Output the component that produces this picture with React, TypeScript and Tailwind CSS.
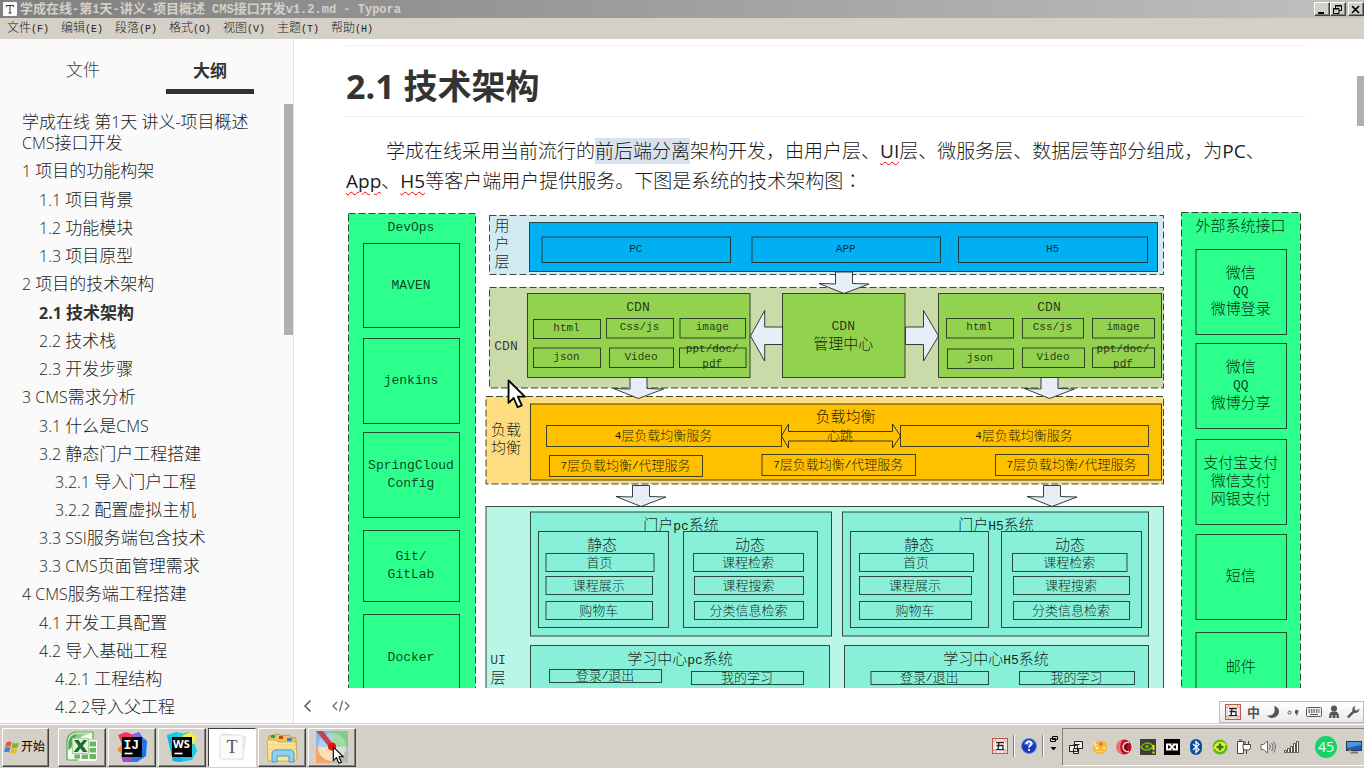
import React from 'react';

/* ---------- text helpers ---------- */

const splitRuns = (s: string) => s.match(/[\x20-\x7e]+|[^\x20-\x7e]+/g) ?? [];
const isLatin = (s: string) => /^[\x20-\x7e]/.test(s);

function Mixed({ text, latin }: { text: string; latin: string }) {
  return (
    <>
      {splitRuns(text).map((r, i) =>
        isLatin(r) ? (
          <span key={i} className={latin}>
            {r}
          </span>
        ) : (
          <React.Fragment key={i}>{r}</React.Fragment>
        ),
      )}
    </>
  );
}

/* ---------- outline ---------- */

type Item = { level: 1 | 2 | 3; text: string; active?: boolean };

const outline: Item[] = [
  { level: 1, text: '1 项目的功能构架' },
  { level: 2, text: '1.1 项目背景' },
  { level: 2, text: '1.2 功能模块' },
  { level: 2, text: '1.3 项目原型' },
  { level: 1, text: '2 项目的技术架构' },
  { level: 2, text: '2.1 技术架构', active: true },
  { level: 2, text: '2.2 技术栈' },
  { level: 2, text: '2.3 开发步骤' },
  { level: 1, text: '3 CMS需求分析' },
  { level: 2, text: '3.1 什么是CMS' },
  { level: 2, text: '3.2 静态门户工程搭建' },
  { level: 3, text: '3.2.1 导入门户工程' },
  { level: 3, text: '3.2.2 配置虚拟主机' },
  { level: 2, text: '3.3 SSI服务端包含技术' },
  { level: 2, text: '3.3 CMS页面管理需求' },
  { level: 1, text: '4 CMS服务端工程搭建' },
  { level: 2, text: '4.1 开发工具配置' },
  { level: 2, text: '4.2 导入基础工程' },
  { level: 3, text: '4.2.1 工程结构' },
  { level: 3, text: '4.2.2导入父工程' },
];

const levelClass = {
  1: 'pl-[22px] pt-1 pb-1',
  2: 'pl-[39px] pt-1 pb-[3px]',
  3: 'pl-[55px] pt-1 pb-[3px]',
};

function Sidebar() {
  return (
    <aside className="relative flex w-[294px] shrink-0 flex-col overflow-hidden border-r border-[#e5e5e5] bg-[#fafafa] text-[17px] text-[#1a1a1a]">
      <div className="flex justify-evenly pt-[13px]">
        <button className="w-[88px] pt-2 pb-[14px] leading-[20px] font-light text-[#444]">文件</button>
        <button className="w-[88px] border-b-[5px] border-[#333] pt-[9px] pb-[8px] leading-[20px] font-bold text-[#333]">
          大纲
        </button>
      </div>
      <nav className="flex flex-col pt-[17px] leading-[21px] font-light">
        <a href="#top" className="pr-8 pb-[3px] pl-[22px]">
          <Mixed text="学成在线 第1天 讲义-项目概述" latin="text-[16px] leading-none" />
          <br />
          <Mixed text="CMS接口开发" latin="text-[16px] leading-none" />
        </a>
        {outline.map((it) => (
          <a
            key={it.text}
            href="#section"
            className={`whitespace-nowrap ${levelClass[it.level]} ${it.active ? 'font-bold text-[#333]' : ''}`}
          >
            <Mixed text={it.text} latin="text-[16px] leading-none" />
          </a>
        ))}
      </nav>
      <div className="absolute top-[65px] right-0 h-[231px] w-[9px] bg-[#b0b0b0]" />
    </aside>
  );
}

/* ---------- architecture diagram ---------- */

const INK = '#1c2b22';

function Label({ x, y, t, small }: { x: number; y: number; t: string; small?: boolean }) {
  const hasHan = splitRuns(t).some((r) => !isLatin(r));
  return (
    <text
      x={x}
      y={hasHan ? y + 1 : y}
      textAnchor="middle"
      dominantBaseline="central"
      fill="#000"
      fillOpacity={hasHan ? 0.88 : 0.75}
      className={small ? 'text-[13px]' : 'text-[15px]'}
    >
      {splitRuns(t).map((r, i) => (
        <tspan key={i} className={isLatin(r) ? (small ? 'text-[11px]' : 'text-[13px]') : ''}>
          {r}
        </tspan>
      ))}
    </text>
  );
}

function Box({
  b,
  fill = 'none',
  dash,
  t,
  small,
}: {
  b: [number, number, number, number];
  fill?: string;
  dash?: boolean;
  t?: string[];
  small?: boolean;
}) {
  const [x1, y1, x2, y2] = b;
  const lines = t ?? [];
  const step = small ? 15 : 18;
  return (
    <g>
      <rect
        x={x1}
        y={y1}
        width={x2 - x1}
        height={y2 - y1}
        fill={fill}
        stroke={INK}
        strokeOpacity={0.85}
        strokeDasharray={dash ? '7 3' : undefined}
      />
      {lines.map((l, i) => (
        <Label
          key={i}
          x={(x1 + x2) / 2 - 0.5}
          y={(y1 + y2) / 2 - 1 + (i - (lines.length - 1) / 2) * step}
          t={l}
          small={small}
        />
      ))}
    </g>
  );
}

function DownArrow({ x, y, h }: { x: number; y: number; h: number }) {
  const n = y + h - 10;
  return (
    <polygon
      points={`${x - 8.5},${y} ${x + 8.5},${y} ${x + 8.5},${n} ${x + 25},${n + 0.5} ${x},${y + h} ${x - 25},${n} ${x - 8.5},${n + 0.5}`}
      fill="#e8eef8"
      stroke={INK}
      strokeWidth={0.9}
    />
  );
}

function Diagram() {
  const G = '#2cff8b';
  const C = '#92d24f';
  const T = '#88f0d8';
  return (
    <svg
      viewBox="346 210 960 478"
      className="block w-full font-['Liberation_Mono','Noto_Sans_CJK_SC',monospace] font-light"
      role="img"
      aria-label="技术架构图"
    >
      <Box b={[348.5, 213.5, 475.5, 740.5]} fill={G} dash />
      <Label x={411} y={227} t="DevOps" />
      <Box b={[363.5, 243.5, 459.5, 327.5]} t={['MAVEN']} />
      <Box b={[363.5, 338.5, 459.5, 423.5]} t={['jenkins']} />
      <Box b={[363.5, 432.5, 459.5, 517.5]} t={['SpringCloud', 'Config']} />
      <Box b={[363.5, 530.5, 459.5, 601.5]} t={['Git/', 'GitLab']} />
      <Box b={[363.5, 614.5, 459.5, 700.5]} t={['Docker']} />

      <Box b={[489.5, 215.5, 1163.5, 274.5]} fill="#d2ebf2" dash />
      <Label x={502} y={226} t="用" />
      <Label x={502} y={244} t="户" />
      <Label x={502} y={262} t="层" />
      <Box b={[529.5, 222.5, 1157.5, 271.5]} fill="#00b0f3" />
      <Box b={[542, 237, 730.5, 262.5]} t={['PC']} small />
      <Box b={[752, 237, 940.5, 262.5]} t={['APP']} small />
      <Box b={[958.5, 237, 1147.5, 262.5]} t={['H5']} small />

      <Box b={[489.5, 287.5, 1163.5, 388]} fill="#cadba9" dash />
      <Label x={506} y={346} t="CDN" />
      <Box b={[527.5, 293.5, 750, 377.5]} fill={C} />
      <Box b={[782.5, 293.5, 905, 377.5]} fill={C} t={['CDN', '管理中心']} />
      <Box b={[938.5, 293.5, 1161.5, 377.5]} fill={C} />
      <Label x={638} y={307} t="CDN" />
      <Label x={1049} y={307} t="CDN" />
      <Box b={[533.5, 319.5, 600.5, 338.5]} t={['html']} small />
      <Box b={[606.5, 318.5, 673.5, 338]} t={['Css/js']} small />
      <Box b={[680, 318.5, 745.5, 338]} t={['image']} small />
      <Box b={[533.5, 348, 600.5, 367.5]} t={['json']} small />
      <Box b={[609.5, 348, 673.5, 367.5]} t={['Video']} small />
      <Box b={[679.5, 348, 746, 367.5]} t={['ppt/doc/', 'pdf']} small />
      <Box b={[946.5, 318.5, 1013.5, 338]} t={['html']} small />
      <Box b={[1022.5, 318.5, 1083.5, 338]} t={['Css/js']} small />
      <Box b={[1092.5, 318.5, 1154.5, 338]} t={['image']} small />
      <Box b={[947.5, 349, 1013.5, 368.5]} t={['json']} small />
      <Box b={[1022.5, 348, 1084.5, 367.5]} t={['Video']} small />
      <Box b={[1092.5, 348, 1154.5, 367.5]} t={['ppt/doc/', 'pdf']} small />

      <polygon
        points="750.5,336 764.7,310.5 764.7,327 782.5,327 782.5,344.5 764.7,344.5 764.7,361"
        fill="#e8eef8"
        stroke={INK}
        strokeWidth={0.9}
      />
      <polygon
        points="938.5,336 923.5,310.5 923.5,327 905.5,327 905.5,344.5 923.5,344.5 923.5,361"
        fill="#e8eef8"
        stroke={INK}
        strokeWidth={0.9}
      />
      <DownArrow x={844} y={272} h={21.5} />

      <Box b={[486, 396.5, 1163.5, 484]} fill="#fedd80" dash />
      <Label x={506} y={430} t="负载" />
      <Label x={506} y={448} t="均衡" />
      <Box b={[530.5, 404, 1161.5, 480]} fill="#ffc000" />
      <Label x={845.5} y={417} t="负载均衡" />
      <Box b={[546.5, 425.5, 781.5, 446.5]} t={['4层负载均衡服务']} small />
      <Box b={[900.5, 425.5, 1148.5, 446.5]} t={['4层负载均衡服务']} small />
      <polygon
        points="781.5,436 788.5,424 788.5,431.5 892.5,431.5 892.5,424 900.5,436 892.5,448 892.5,441 788.5,441 788.5,448"
        fill="none"
        stroke={INK}
        strokeWidth={0.9}
      />
      <Label x={840} y={435} t="心跳" small />
      <Box b={[549.5, 455.5, 702.5, 476.5]} t={['7层负载均衡/代理服务']} small />
      <Box b={[762, 454.5, 915.5, 475.5]} t={['7层负载均衡/代理服务']} small />
      <Box b={[995.5, 454.5, 1148.5, 475.5]} t={['7层负载均衡/代理服务']} small />
      <DownArrow x={638.5} y={377.5} h={21} />
      <DownArrow x={1049.5} y={377.5} h={21} />

      <Box b={[486, 506.5, 1163.5, 740.5]} fill="#baf6e6" />
      <DownArrow x={641} y={485.5} h={21} />
      <DownArrow x={1052} y={485.5} h={21} />
      <Label x={498} y={660} t="UI" />
      <Label x={498} y={678} t="层" />
      <Box b={[530.5, 512, 831.5, 636]} fill={T} />
      <Box b={[842.5, 512, 1148.5, 636]} fill={T} />
      <Label x={681} y={525} t="门户pc系统" />
      <Label x={996} y={525} t="门户H5系统" />
      <Box b={[538.5, 531.5, 668.5, 627.5]} />
      <Box b={[683.5, 531.5, 817.5, 627.5]} />
      <Box b={[850.5, 531.5, 988.5, 627.5]} />
      <Box b={[1001.5, 531.5, 1141.5, 627.5]} />
      <Label x={602} y={544.5} t="静态" />
      <Label x={750} y={544.5} t="动态" />
      <Label x={919} y={544.5} t="静态" />
      <Label x={1070} y={544.5} t="动态" />
      <Box b={[546, 553.5, 654, 571.5]} t={['首页']} small />
      <Box b={[546, 576.5, 652.5, 594.5]} t={['课程展示']} small />
      <Box b={[546, 601.5, 652.5, 619.5]} t={['购物车']} small />
      <Box b={[693.5, 553.5, 803.5, 571.5]} t={['课程检索']} small />
      <Box b={[694.5, 576.5, 803.5, 594.5]} t={['课程搜索']} small />
      <Box b={[694.5, 601.5, 803.5, 619.5]} t={['分类信息检索']} small />
      <Box b={[859.5, 553.5, 973.5, 571.5]} t={['首页']} small />
      <Box b={[859.5, 576.5, 971.5, 594.5]} t={['课程展示']} small />
      <Box b={[859.5, 601.5, 971.5, 619.5]} t={['购物车']} small />
      <Box b={[1012.5, 553.5, 1127, 571.5]} t={['课程检索']} small />
      <Box b={[1013.5, 576.5, 1129.5, 594.5]} t={['课程搜索']} small />
      <Box b={[1013.5, 601.5, 1129.5, 619.5]} t={['分类信息检索']} small />
      <Box b={[530.5, 645.5, 829.5, 740.5]} fill={T} />
      <Box b={[844.5, 645.5, 1148.5, 740.5]} fill={T} />
      <Label x={680} y={658.5} t="学习中心pc系统" />
      <Label x={996} y={658.5} t="学习中心H5系统" />
      <Box b={[549.5, 669.5, 661.5, 682.5]} t={['登录/退出']} small />
      <Box b={[691.5, 671.5, 803.5, 684.5]} t={['我的学习']} small />
      <Box b={[871, 671.5, 988.5, 684.5]} t={['登录/退出']} small />
      <Box b={[1019.5, 671.5, 1134.5, 684.5]} t={['我的学习']} small />

      <Box b={[1181.5, 212.5, 1300.5, 740.5]} fill={G} dash />
      <Label x={1240.5} y={226} t="外部系统接口" />
      <Box b={[1196, 249.5, 1286.5, 334.5]} t={['微信', 'QQ', '微博登录']} />
      <Box b={[1196, 343.5, 1286.5, 428.5]} t={['微信', 'QQ', '微博分享']} />
      <Box b={[1196, 439.5, 1286.5, 524.5]} t={['支付宝支付', '微信支付', '网银支付']} />
      <Box b={[1196, 534.5, 1286.5, 619.5]} t={['短信']} />
      <Box b={[1196, 632.5, 1286.5, 703.5]} t={['邮件']} />
    </svg>
  );
}

/* ---------- editor ---------- */

function Editor() {
  const typo = 'underline decoration-[#f00000] decoration-wavy decoration-1 underline-offset-[3px]';
  return (
    <main className="relative flex min-w-0 flex-1 flex-col bg-white">
      <div className="min-h-0 flex-1 overflow-hidden pt-[6px] pr-[58px] pl-[52px]">
        <hr className="border-[#eee]" />
        <h1 className="border-b border-[#eee] pt-[19px] pb-[9px] text-[34px] leading-[42px] font-bold text-[#333]">
          2.1 技术架构
        </h1>
        <p className="mt-[19px] pb-[14px] text-[19px] leading-[30px] font-light whitespace-nowrap text-[#1a1a1a]">
          <span className="pl-10">学成在线采用当前流行的</span>
          <span className="bg-[#d9e2ec]">前后端分离</span>架构开发，由用户层、
          <span className={`font-normal ${typo}`}>UI</span>
          层、微服务层、数据层等部分组成，为<span className="font-normal">PC</span>、
          <br />
          <span className={`font-normal ${typo}`}>App</span>、<span className={`font-normal ${typo}`}>H5</span>
          等客户端用户提供服务。下图是系统的技术架构图
          <span className="font-['Noto_Sans_CJK_JP',sans-serif] leading-none" lang="ja">
            ：
          </span>
        </p>
        <Diagram />
      </div>
      <div className="flex h-[35px] shrink-0 items-center gap-[18px] bg-white pl-2">
        <button aria-label="折叠侧栏">
          <svg width="12" height="14" viewBox="0 0 12 14" fill="none" stroke="#555" strokeWidth="1.5">
            <path d="M8.5 1.5 3 7l5.500 5.500" />
          </svg>
        </button>
        <button aria-label="源代码模式">
          <svg width="18" height="14" viewBox="0 0 18 14" fill="none" stroke="#666" strokeWidth="1.200">
            <path d="M5 3 1 7l4 4M13 3l4 4-4 4M10.500 1.500l-3 11" />
          </svg>
        </button>
      </div>
      <div className="absolute top-[37px] right-0 h-[50px] w-[7px] bg-[#b0b0b0]" />
      <Cursor className="absolute top-[340px] left-[213px] h-[31px] w-[20px]" />
      <ImeBar />
    </main>
  );
}

function Cursor({ className }: { className: string }) {
  return (
    <svg viewBox="0 0 14 22" className={className}>
      <path
        d="M1 1v16l3.700-3.500L7.400 20l3-1.200-2.800-6.300h5z"
        fill="#fff"
        stroke="#000"
        strokeWidth="1.300"
        strokeLinejoin="round"
      />
    </svg>
  );
}

/* ---------- IME bar ---------- */

function Wubi() {
  return (
    <svg width="16" height="16" viewBox="0 0 16 16">
      <rect x="0.5" y="0.5" width="15" height="15" fill="#f8dcd8" stroke="#c0584c" />
      <path d="M1 3.500h14M1 12.500h14M3.500 1v14M12.500 1v14" stroke="#dd9a92" />
      <rect x="3" y="3" width="10" height="10" fill="#fff" />
      <path d="M4 4.500h8M4.500 7.500h6.500v4M7 4.500l-1 7M3.500 11.700h9" fill="none" stroke="#222" strokeWidth="1.300" />
    </svg>
  );
}

function ImeBar() {
  return (
    <div className="absolute right-0 bottom-0 flex h-[22px] w-[145px] items-center gap-[6px] border border-[#bbb] bg-linear-to-b from-white to-[#e9e9e9] pl-[5px] text-[#555]">
      <Wubi />
      <button className="text-[13px] leading-[16px] font-bold">中</button>
      <svg width="14" height="14" viewBox="0 0 14 14">
        <path d="M8 1c5 1 6.500 6 3.500 9.500S3 13.500 1 10.500c3.500.5 7-1 7.500-4C8.800 4.500 8.700 2.500 8 1z" fill="#555" />
      </svg>
      <svg width="14" height="14" viewBox="0 0 14 14">
        <circle cx="3.500" cy="7.500" r="1.500" fill="none" stroke="#555" />
        <path d="M9 6.500a1.700 1.700 0 1 1 3 1.200c-.2 1.500-1 2.600-2.300 3.100.5-.8.8-1.400.7-2.100A1.600 1.600 0 0 1 9 6.500z" fill="#555" />
      </svg>
      <svg width="16" height="12" viewBox="0 0 16 12">
        <rect x="0.500" y="1.500" width="15" height="9" rx="1" fill="#f4f4f4" stroke="#555" />
        <path d="M2.500 4h11M2.500 6h11" stroke="#555" strokeDasharray="1.500 1" strokeWidth="1.300" />
        <path d="M4 8.500h8" stroke="#555" />
      </svg>
      <svg width="12" height="14" viewBox="0 0 12 14" fill="#555">
        <circle cx="6" cy="3.500" r="3" />
        <path d="M1 13c0-4 1-6 3-6.500h4c2 .5 3 2.500 3 6.500H8.500v-3h-1V13h-3v-3h-1v3z" />
      </svg>
      <svg width="14" height="14" viewBox="0 0 14 14">
        <path
          d="M9.500 1a3.800 3.800 0 0 0-3 5L1 11.500 2.700 13.300 8.300 7.800a3.800 3.800 0 0 0 5-4.300L11 5.500 9 5l-.5-2z"
          fill="#555"
        />
      </svg>
    </div>
  );
}

/* ---------- window chrome ---------- */

const raised =
  'border border-t-white border-l-white border-r-[#404040] border-b-[#404040] bg-[#d4d0c8] shadow-[inset_-1px_-1px_0_#808080]';

function TitleBar() {
  return (
    <header className="flex h-[18px] shrink-0 items-center bg-linear-to-r from-[#808080] to-[#c0c0c0] pl-[3px]">
      <svg width="14" height="14" viewBox="0 0 14 14">
        <rect width="14" height="14" rx="1" fill="#fafafa" />
        <path d="M3.500 5V3.500h7V5M7 3.500v7.500M5.500 11h3" fill="none" stroke="#333" />
      </svg>
      <span className="ml-[3px] text-[13px] leading-[18px] font-bold whitespace-pre text-[#d4d0c8]">
        <Mixed
          text="学成在线-第1天-讲义-项目概述 CMS接口开发v1.2.md - Typora"
          latin="font-['Liberation_Mono',monospace] text-[12px]"
        />
      </span>
      <span className="flex-1" />
      <button aria-label="最小化" className={`h-[14px] w-[16px] ${raised}`}>
        <svg width="13" height="11" viewBox="0 0 13 11">
          <path d="M3 9h6" stroke="#000" strokeWidth="2" />
        </svg>
      </button>
      <button aria-label="还原" className={`h-[14px] w-[16px] ${raised}`}>
        <svg width="13" height="11" viewBox="0 0 13 11" fill="none" stroke="#000">
          <path d="M4.500 4V1.500h6v5H8M4 2h7M2.500 4.500H8v5H2.500zM2 5h6" />
        </svg>
      </button>
      <button aria-label="关闭" className={`ml-[2px] h-[14px] w-[16px] ${raised}`}>
        <svg width="13" height="11" viewBox="0 0 13 11">
          <path d="M3 2l7 7M10 2l-7 7" stroke="#000" strokeWidth="1.700" />
        </svg>
      </button>
    </header>
  );
}

const menus = ['文件(F)', '编辑(E)', '段落(P)', '格式(O)', '视图(V)', '主题(T)', '帮助(H)'];

function MenuBar() {
  return (
    <div className="flex h-[21px] shrink-0 items-center gap-3 bg-[#d4d0c8] pt-px pl-[7px] text-[12px] leading-[20px] font-light text-[#222]">
      {menus.map((m) => (
        <button key={m} className="w-[42px] text-left whitespace-nowrap">
          <Mixed text={m} latin="font-['Liberation_Mono',monospace] text-[10px]" />
        </button>
      ))}
    </div>
  );
}

/* ---------- taskbar ---------- */

function ExcelIcon() {
  return (
    <svg width="34" height="34" viewBox="0 0 34 34">
      <path d="M2 29V12C2 6 6 2 12 2h16v14l-6 14H3z" fill="#f1f8ee" stroke="#57a85c" strokeWidth="1.200" />
      <path d="M3.500 20v-8C4 7 7 3.500 12 3.500h14.500C14 5 13 11 12 14z" fill="#8fcb8c" />
      <path d="M3.500 20v-7C4 8 7 5 12 4.500 8 9 9 15 3.500 20z" fill="#4fa655" />
      <rect x="13.500" y="9.500" width="19" height="22" fill="#fff" stroke="#b7d8b4" transform="rotate(2 23 20)" />
      <path d="M24.500 11.500h6.500v5h-6.500zM24.500 18h6.500v4.500h-6.500zM24.500 24h6.500v5h-6.500zM16.500 24.500h6.500v4.500h-6.500zM9.500 24.500h5.500v4h-5.500z" fill="#6bb65c" />
      <rect x="7.500" y="8.500" width="16" height="15" fill="#e3f2df" stroke="#a5cf9f" />
      <path d="M9 10h4.500l2.300 3.300L18.500 10h4l-4.700 5.700 4.700 6.300H18l-2.500-3.600L12.500 22h-4l5-6z" fill="#226b2c" />
    </svg>
  );
}

function IntellijIcon() {
  return (
    <svg width="34" height="34" viewBox="0 0 34 34">
      <path d="M3 5l8-3 8 3 4 8-12 13-7-6 3-6z" fill="#fc3266" />
      <path d="M2 20l6-7 6 5-5 8z" fill="#fb8428" />
      <path d="M18 4l6-2 4 7-2 8-7-4z" fill="#8c62f3" />
      <path d="M25 5l7 6-1 15-9 6-7-1 9-14z" fill="#0f78f2" />
      <path d="M24 2l3 5 1 10-3 8-3-12z" fill="#5b6cf0" />
      <path d="M6 25l9-5 8 8-4 4-11 0z" fill="#a24fc8" />
      <path d="M17 26h8l-3 6-6-1z" fill="#2f74ee" />
      <rect x="7" y="7" width="20" height="20" fill="#000" />
      <text x="8.500" y="18.500" fill="#fff" className="font-['Liberation_Mono',monospace] text-[13px] font-bold">
        IJ
      </text>
      <path d="M9.500 23.500h8" stroke="#fff" strokeWidth="1.700" />
    </svg>
  );
}

function WebstormIcon() {
  return (
    <svg width="34" height="34" viewBox="0 0 34 34">
      <path d="M2 5l9-3 7 2 6-2 6 3-1 8 3 8-5 9-13 2-6-1z" fill="#17c9ee" />
      <path d="M2 5l6 26 9 1-5-20z" fill="#12b5e0" />
      <path d="M12 2l8 2 3 10-9-2z" fill="#26d7c4" />
      <path d="M17 6l8-4 6 4-2 8-9-2z" fill="#f3f04a" />
      <path d="M28 14l3 7-4 8-4-8z" fill="#26cfd8" />
      <rect x="7" y="7" width="20" height="20" fill="#000" />
      <text x="8" y="18" fill="#fff" className="font-['Open_Sans',sans-serif] text-[11px] font-bold">
        WS
      </text>
      <path d="M9.500 23.500h8" stroke="#fff" strokeWidth="1.700" />
    </svg>
  );
}

function TyporaIcon() {
  return (
    <svg width="34" height="34" viewBox="0 0 34 34">
      <rect x="6" y="5" width="23" height="23" fill="#f3f3f3" stroke="#ddd" transform="rotate(8 17 17)" />
      <rect x="5" y="5" width="23" height="24" rx="1" fill="#fbfbfb" stroke="#e2e2e2" />
      <text x="17" y="23" textAnchor="middle" fill="#555" className="font-['Liberation_Serif',serif] text-[18px]">
        T
      </text>
    </svg>
  );
}

function ExplorerIcon() {
  return (
    <svg width="34" height="34" viewBox="0 0 34 34">
      <path d="M4 6l10-2 2 2 8-1 2 2 5 1v20H3z" fill="#e8c766" stroke="#b88f33" strokeWidth="0.800" />
      <path d="M6 5h4v3H6z" fill="#2aa44a" />
      <path d="M14 6h4v3h-4z" fill="#d6402a" />
      <path d="M22 8h5v3h-5z" fill="#3a7bd0" />
      <path d="M2 10h9l2 2h18l1 17-3 2H3z" fill="#f9e59a" stroke="#c9a548" strokeWidth="0.800" />
      <path d="M4 15h27M4 19h27" stroke="#eccf74" />
      <path d="M7 32V24c0-3 2-4 4-4h14c2 0 4 1 4 4v8h-5v-6H12v6z" fill="#8fd0f0" stroke="#3c8fc4" strokeWidth="0.900" />
    </svg>
  );
}

function PinwheelIcon() {
  return (
    <svg width="34" height="34" viewBox="0 0 34 34">
      <path d="M1 1h16v16H1z" fill="#8ab9e6" />
      <path d="M17 1h16v16H17z" fill="#82cb8a" />
      <path d="M1 17h16v16H1z" fill="#f6a56a" />
      <path d="M17 17h16v16H17z" fill="#b9b9b9" />
      <path d="M17 17H3A14 14 0 0 1 17 3z" fill="#a9d2f2" />
      <path d="M17 17V3a14 14 0 0 1 14 14z" fill="#a5dba8" />
      <path d="M17 17H3a14 14 0 0 0 14 14z" fill="#fce0b4" />
      <path d="M17 17v14a14 14 0 0 0 14-14z" fill="#dedede" />
      <path d="M1 1h7l10 13-4 3z" fill="#bf4556" />
      <circle cx="17" cy="16.500" r="4" fill="#f01010" />
    </svg>
  );
}

function TaskButton({ label, pressed, children }: { label: string; pressed?: boolean; children: React.ReactNode }) {
  return (
    <button
      aria-label={label}
      className={`flex h-[39px] w-[48px] items-center justify-center ${
        pressed ? 'border border-t-[#404040] border-r-white border-b-white border-l-[#404040] bg-white' : raised
      }`}
    >
      {children}
    </button>
  );
}

const trayCell = 'flex w-6 shrink-0 justify-center';

function Tray() {
  return (
    <div className="mt-[2px] flex h-[38px] items-center border-t border-b border-l border-t-[#808080] border-b-white border-l-[#808080] pl-px">
      <span className={trayCell}>
        <svg width="14" height="14" viewBox="0 0 14 14" fill="#eee" stroke="#222">
          <path d="M5.500 1.500h8v7h-8zM.5 5.500h8v6h-8zM4.500 4.500h6M4.500 8.500v5h5v-5z" />
        </svg>
      </span>
      <span className={trayCell}>
        <svg width="16" height="16" viewBox="0 0 16 16">
          <path d="M1 9C1 3 8 0 13 3c4 4 2 11-4 12-5 .500-8-2-8-6z" fill="#f7b733" />
          <path d="M0 1c2 3 4 2 5 5L3 8z" fill="#f4e6a2" />
          <circle cx="5" cy="9" r="1.500" fill="#fff2b8" />
          <circle cx="9" cy="5" r="1.500" fill="#e8542c" />
          <circle cx="12" cy="9" r="1.500" fill="#ffe37a" />
          <path d="M4 11c2 2 6 2 8 0-1 3-7 3-8 0z" fill="#fff3c0" />
        </svg>
      </span>
      <span className={trayCell}>
        <svg width="16" height="16" viewBox="0 0 16 16">
          <circle cx="8" cy="8" r="7.500" fill="#b5151d" />
          <path d="M7 1a7 7 0 0 0 0 14 10 10 0 0 1 0-14z" fill="#e8757a" />
          <path d="M13 3.500C9 3 7 5 7 8s2 5 6 4.500" fill="none" stroke="#f6d5d5" strokeWidth="1.400" />
          <path d="M12 5l-3 3 3 3.500" fill="none" stroke="#5d0a0e" strokeWidth="1.500" />
        </svg>
      </span>
      <span className={trayCell}>
        <svg width="16" height="16" viewBox="0 0 16 16">
          <rect width="16" height="16" fill="#3a3f3a" />
          <path d="M1 8c3-5 9-5 12-1-3 5-9 5-12 1z" fill="none" stroke="#76b900" strokeWidth="1.500" />
          <circle cx="7" cy="7.500" r="1.800" fill="#76b900" />
          <path d="M13.500 6v5M13.500 12.500v2" stroke="#ffe600" strokeWidth="2" />
        </svg>
      </span>
      <span className={trayCell}>
        <svg width="16" height="16" viewBox="0 0 16 16">
          <rect width="16" height="16" fill="#000" />
          <path d="M2 4.500h12v7H2z" fill="#fff" />
          <path d="M4 6l3 2-3 2zM12 6L9 8l3 2zM7 4.500h2L8 7zM7 11.500h2L8 9z" fill="#000" />
        </svg>
      </span>
      <span className={trayCell}>
        <svg width="14" height="16" viewBox="0 0 14 16">
          <rect x="1" width="12" height="16" rx="6" fill="#0b4f9c" />
          <path d="M4 5l6 5.500L7 13.500v-11L10 5.500 4 11" fill="none" stroke="#fff" strokeWidth="1.200" />
        </svg>
      </span>
      <span className={trayCell}>
        <svg width="16" height="16" viewBox="0 0 16 16">
          <circle cx="8" cy="8" r="7.500" fill="#5fb81e" />
          <path d="M1 10A8 8 0 0 1 15 6l-3 1a5 5 0 0 0-9 3z" fill="#f8dc1c" />
          <circle cx="8" cy="8" r="5" fill="#f5ef3a" />
          <path d="M8 4.500v7M4.500 8h7" stroke="#23831d" strokeWidth="2.500" />
        </svg>
      </span>
      <span className={trayCell}>
        <svg width="16" height="16" viewBox="0 0 16 16" fill="#fff" stroke="#444">
          <path d="M1.500 2.500h6v12h-6zM3 1h3" />
          <path d="M7 5.500h7.500v3a3 3 0 0 1-2 2.500H9a3 3 0 0 1-2-2.500zM9 5V2M12.500 5V2M10.500 11v4" />
        </svg>
      </span>
      <span className={trayCell}>
        <svg width="16" height="16" viewBox="0 0 16 16" fill="none" stroke="#666">
          <path d="M1 5.500h2.500L7.500 2v12L3.500 10.500H1z" fill="#fff" />
          <path d="M9.500 5.500c1 1.500 1 3.500 0 5M11.500 4c2 2.500 2 5.500 0 8M13.500 2.500c2.500 3.500 2.500 7.500 0 11" />
        </svg>
      </span>
      <span className={trayCell}>
        <svg width="16" height="14" viewBox="0 0 16 14" fill="#fff" stroke="#555">
          <path d="M.5 10.500h2v2h-2zM3.500 8.500h2v4h-2zM6.500 6.500h2v6h-2zM9.500 3.500h2v9h-2zM12.500 1.500h2v11h-2z" />
        </svg>
      </span>
      <span className="ml-[11px] flex size-[22px] items-center justify-center rounded-full bg-[#13d467] font-['Open_Sans',sans-serif] text-[14px] leading-[22px] text-white">
        45
      </span>
      <svg width="16" height="16" viewBox="0 0 16 16" className="ml-[9px]">
        <rect x="0.500" y="2.500" width="15" height="9" fill="#1c5fb8" stroke="#2a3a55" />
        <path d="M1 3h14v3L1 9z" fill="#4f93dd" />
        <path d="M4 13.500h8" stroke="#777" strokeWidth="2" />
        <circle cx="4" cy="12.500" r="1.500" fill="#f2b632" />
      </svg>
      <span className="w-[2px]" />
    </div>
  );
}

function Taskbar() {
  return (
    <footer className="flex h-[45px] shrink-0 items-center border-t border-[#d4d0c8] bg-[#d4d0c8] pl-[2px] shadow-[inset_0_1px_0_#fff]">
      <button
        className={`mt-[2px] flex h-[39px] w-[47px] items-center gap-px pl-px text-[12px] leading-[18px] whitespace-nowrap text-black ${raised}`}
      >
        <svg width="16" height="15" viewBox="0 0 16 15" className="shrink-0">
          <path d="M2.500 2.500C4.500 1.200 6 1.300 7.700 2.200L6.500 6.800C4.800 5.900 3.200 5.900 1.200 7z" fill="#e8582a" />
          <path d="M8.700 2.700c2 1 4 1 6.300-.2l-1.300 4.700c-2.200 1.200-4.200 1.200-6.200.2z" fill="#7ab82c" />
          <path d="M1 8c2-1.200 3.600-1.200 5.300-.2l-1.200 4.700C3.400 11.500 1.800 11.600 0 12.600z" fill="#3f86d8" />
          <path d="M7.200 8.300c2 1 4 1 6.200-.1l-1.200 4.600c-2.200 1.200-4.200 1.200-6.200.2z" fill="#f6b91c" />
        </svg>
        开始
      </button>
      <div className="mt-[2px] ml-[9px] flex gap-[2px]">
        <TaskButton label="Excel">
          <ExcelIcon />
        </TaskButton>
        <TaskButton label="IntelliJ IDEA">
          <IntellijIcon />
        </TaskButton>
        <TaskButton label="WebStorm">
          <WebstormIcon />
        </TaskButton>
        <TaskButton label="Typora" pressed>
          <TyporaIcon />
        </TaskButton>
        <TaskButton label="资源管理器">
          <ExplorerIcon />
        </TaskButton>
        <div className="relative">
          <TaskButton label="画图工具">
            <PinwheelIcon />
          </TaskButton>
          <Cursor className="absolute top-[18px] left-[24px] h-[19px] w-[13px]" />
        </div>
      </div>
      <span className="flex-1" />
      <div className="flex items-center">
        <Wubi />
        <span className="mx-[5px] h-[22px] w-[2px] border-r border-white bg-[#808080]" />
        <svg width="16" height="16" viewBox="0 0 16 16" className="ml-px">
          <circle cx="8" cy="8" r="7.500" fill="#1539b8" stroke="#6c86d8" />
          <path d="M2.500 6a6 6 0 0 1 11 0c-3 1.500-8 1.500-11 0z" fill="#5878e0" />
          <path d="M5.500 6c0-3.500 5-3.300 5-.300C10.500 7.500 8 7.500 8 9.500M8 11v2" fill="none" stroke="#fff" strokeWidth="1.900" />
        </svg>
        <span className="mx-[5px] h-[22px] w-[2px] border-r border-white bg-[#808080]" />
        <svg width="10" height="18" viewBox="0 0 10 18" className="mr-[3px] mb-[4px]">
          <path d="M3.500 1.500h5v3h-5zM1.500 3.500h5v3h-5z" fill="#d4d0c8" stroke="#000" />
          <path d="M1.500 12h6l-3 3.500z" fill="#000" />
        </svg>
      </div>
      <Tray />
    </footer>
  );
}

export default function App() {
  return (
    <div className="flex h-screen flex-col overflow-hidden bg-white font-['Open_Sans','Noto_Sans_CJK_SC',sans-serif]">
      <TitleBar />
      <MenuBar />
      <div className="flex min-h-0 flex-1">
        <Sidebar />
        <Editor />
      </div>
      <Taskbar />
    </div>
  );
}
